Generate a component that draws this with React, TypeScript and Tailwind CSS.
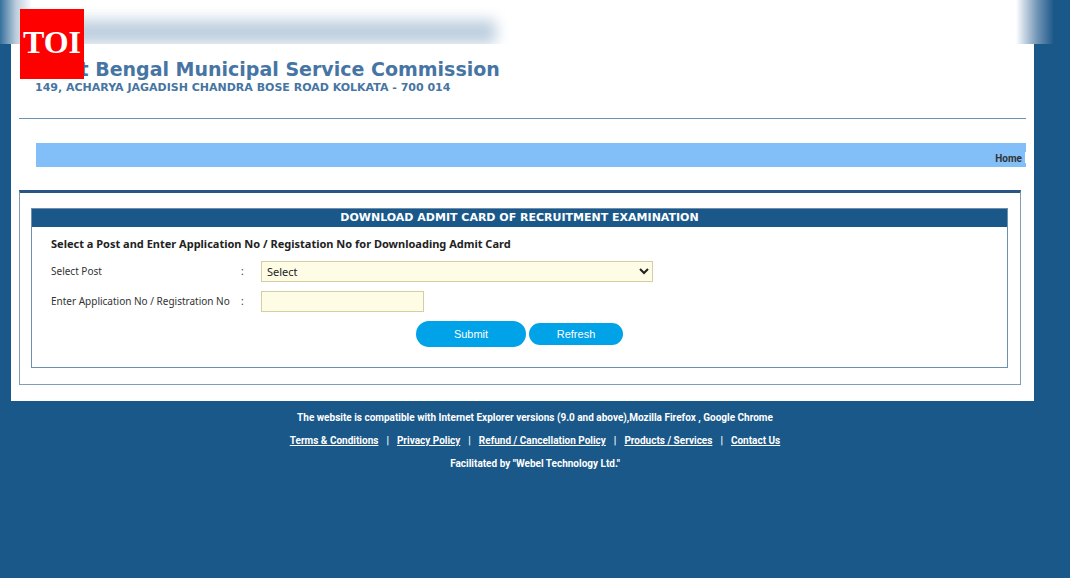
import { useState } from "react";

const footerLinks = [
  "Terms & Conditions",
  "Privacy Policy",
  "Refund / Cancellation Policy",
  "Products / Services",
  "Contact Us",
];

function TopBlur() {
  return (
    <div
      aria-hidden="true"
      className="absolute inset-x-0 top-0 h-11 overflow-hidden bg-white flex justify-between"
    >
      <div className="w-8 bg-linear-to-r from-[#34709c] via-[#bccddb] via-50% to-white" />
      <div className="flex-1 pl-1 pt-5">
        <div className="h-6 w-[460px] rounded-sm bg-[#4675a4]/35 blur-[7px]" />
      </div>
      <div className="w-[54px] bg-linear-to-r from-white via-[#6f94b4] via-40% to-[#1a588a] to-70%" />
    </div>
  );
}

function Badge() {
  return (
    <div className="absolute left-5 top-[9px] w-16 h-[70px] bg-[#ff0000] flex items-center justify-center pb-1 text-white font-bold text-[32px] leading-9 font-['Liberation_Serif',serif]">
      TOI
    </div>
  );
}

function Header() {
  return (
    <header className="mx-2 pl-4 pt-[57px] pb-6 border-b border-[#6f93b3] text-[#4675a4] font-bold">
      <h1 className="text-[19px] leading-6">West Bengal Municipal Service Commission</h1>
      <p className="pt-px text-[11px] leading-3">149, ACHARYA JAGADISH CHANDRA BOSE ROAD KOLKATA - 700 014</p>
    </header>
  );
}

function AdmitCardForm() {
  const [applicationNo, setApplicationNo] = useState("");

  return (
    <form
      className="border border-[#6f8faf] text-[10px] text-[#333333] font-['Noto_Sans',sans-serif]"
      onSubmit={(e) => e.preventDefault()}
    >
      <h2 className="bg-[#1a588a] text-white text-center text-[11px] font-bold leading-[18px] font-['DejaVu_Sans',sans-serif]">
        DOWNLOAD ADMIT CARD OF RECRUITMENT EXAMINATION
      </h2>
      <div className="px-[19px] pt-2 pb-5">
        <p className="text-[11px] leading-[18px] font-bold text-[#222222]">
          Select a Post and Enter Application No / Registation No for Downloading Admit Card
        </p>

        <div className="mt-2 flex items-center">
          <label htmlFor="post" className="w-[190px]">
            Select Post
          </label>
          <span className="w-5">:</span>
          <select
            id="post"
            className="w-[392px] h-[21px] pl-px border border-[#d5cda5] bg-[#fffce6] text-[#222222] text-[11px]"
          >
            <option>Select</option>
          </select>
        </div>

        <div className="mt-[9px] flex items-center">
          <label htmlFor="application-no" className="w-[190px]">
            Enter Application No / Registration No
          </label>
          <span className="w-5">:</span>
          <input
            id="application-no"
            type="text"
            value={applicationNo}
            onChange={(e) => setApplicationNo(e.target.value)}
            className="w-[163px] h-[21px] px-1 border border-[#d5cda5] bg-[#fffce6]"
          />
        </div>

        <div className="mt-[9px] flex items-center justify-center gap-[3px] text-[11px] text-white font-['Liberation_Sans',sans-serif]">
          <button type="submit" className="w-[110px] h-[26px] rounded-full bg-[#00a2e8]">
            Submit
          </button>
          <button
            type="button"
            className="w-[94px] h-[22px] rounded-full bg-[#00a2e8]"
            onClick={() => setApplicationNo("")}
          >
            Refresh
          </button>
        </div>
      </div>
    </form>
  );
}

function Footer() {
  return (
    <footer className="pt-[9px] flex flex-col items-center gap-[7px] text-[10px] leading-4 font-bold text-white font-['Roboto',sans-serif]">
      <p>The website is compatible with Internet Explorer versions (9.0 and above),Mozilla Firefox , Google Chrome</p>
      <nav className="flex gap-2">
        {footerLinks.map((label, idx) => (
          <span key={label} className="flex gap-2">
            {idx > 0 && <span>|</span>}
            <a href="#" className="underline">
              {label}
            </a>
          </span>
        ))}
      </nav>
      <p>Facilitated by "Webel Technology Ltd."</p>
    </footer>
  );
}

export default function App() {
  return (
    <div className="relative min-h-screen bg-[#1a588a] font-['DejaVu_Sans',sans-serif]">
      <div className="ml-[11px] mr-9 bg-white pb-4">
        <Header />

        {/* Navigation */}
        <nav className="mt-6 ml-[25px] mr-2 h-6 bg-[#82bef7] flex justify-end">
          <a
            href="#"
            className="self-end pr-[3px] text-[10px] leading-4 font-bold text-[#333333] font-['Roboto',sans-serif]"
          >
            Home
          </a>
          <span className="w-px h-[11px] mt-[9px] bg-white" />
        </nav>

        <main className="mt-[23px] ml-2 mr-[13px] border border-t-3 border-[#7f9db9] border-t-[#285585] pl-[11px] pr-3 pt-[15px] pb-4">
          <AdmitCardForm />
        </main>
      </div>
      <Footer />
      <TopBlur />
      <Badge />
    </div>
  );
}
